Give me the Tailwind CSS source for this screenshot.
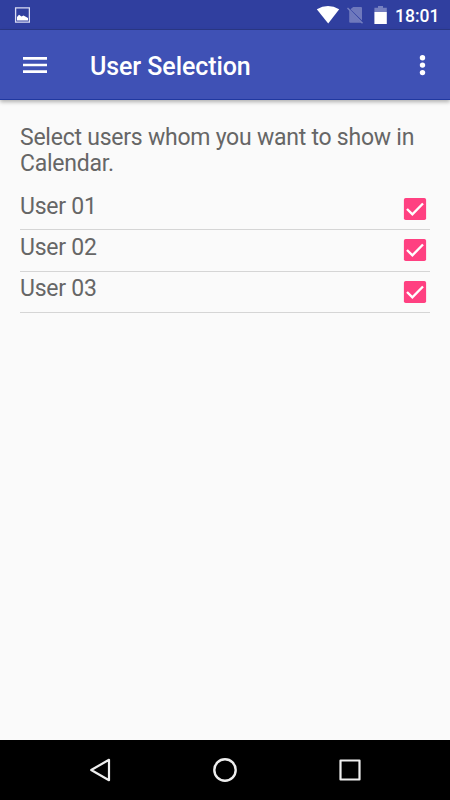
<!DOCTYPE html>
<html lang="en">
<head>
<meta charset="utf-8">
<title>User Selection</title>
<script src="https://cdn.jsdelivr.net/npm/@tailwindcss/browser@4"></script>
</head>
<body class="w-[450px] h-[800px] overflow-hidden flex flex-col bg-[#fafafa] font-[Roboto,sans-serif] text-[#666666]">
<div class="h-[30px] shrink-0 bg-[#303f9f] border-b border-[#2b3887] flex items-center text-white">
  <svg class="ml-[14px] w-4 h-[30px]" viewBox="14 0 16 30" fill="none"><path d="M15.6 7.9H29.4V22.2H15.6Z" stroke="#d9dcf3" stroke-width="1.3"/><path d="M17 20.5V17L19 14.8L21.5 16.5L23.5 15.5L28 18V20.5Z" fill="#fff"/></svg>
  <svg class="ml-auto w-[80px] h-[30px]" viewBox="310 0 80 30" fill="none">
    <path d="M316.8 9.2Q328 2.6 339.2 9.2L328.2 23.6Z" fill="#fff"/>
    <path d="M353.2 7H361Q362 7 362 8V20.6L350.4 9.2ZM349.2 10.6L361.4 22.8H350.2Q349.2 22.8 349.2 21.8Z" fill="#6f79bc"/>
    <path d="M347.5 8L362.5 23.3" stroke="#7680c0" stroke-width="1.4"/>
    <path d="M374.4 12V7.8H378V6H383V7.8H386.8V12Z" fill="#7680c0"/><path d="M374.4 12H386.8V24H374.4Z" fill="#fff"/>
  </svg>
  <span class="w-[45px] ml-[5px] mr-[10px] text-[17.5px] leading-[30px] font-medium whitespace-nowrap relative top-px">18:01</span>
</div>
<header class="relative h-[70px] shrink-0 bg-[#3f51b5] border-b border-[#2038a0] shadow-[0_2px_4px_rgba(0,0,0,0.3)] flex items-center text-white">
  <svg class="ml-[23px] w-6 h-[18px]" viewBox="0 0 24 18"><path d="M0 1H24V3.7H0ZM0 7.7H24V10.3H0ZM0 14.3H24V17H0Z" fill="#fff"/></svg>
  <h1 class="ml-[43px] text-[25px] leading-[30px] tracking-[-0.08px] font-medium whitespace-nowrap relative top-[2px]">User Selection</h1>
  <svg class="ml-auto mr-[24px] w-2 h-6" viewBox="0 0 8 24" fill="#fff"><circle cx="4.5" cy="4.7" r="2.7"/><circle cx="4.5" cy="12.1" r="2.7"/><circle cx="4.5" cy="19.6" r="2.7"/></svg>
</header>
<main class="flex-1 px-5 pt-[25px] text-[23px] tracking-[-0.24px] leading-[26.4px]">
  <p class="h-[64px]">Select users whom you want to show in<br>Calendar.</p>
  <ul>
    <li class="h-[41.3px] border-b border-[#d5d5d5] flex justify-between pr-[3px]"><span class="pt-[5px]">User 01</span><svg class="mt-2 w-6 h-6" viewBox="0 0 24 24"><rect x=".9" y=".9" width="22.2" height="22.2" rx="1.8" fill="#ff4081"/><path d="M4 12L9.4 17.3L20 6.5" fill="none" stroke="#fff" stroke-width="2.4"/></svg></li>
    <li class="h-[41.3px] border-b border-[#d5d5d5] flex justify-between pr-[3px]"><span class="pt-[5px]">User 02</span><svg class="mt-2 w-6 h-6" viewBox="0 0 24 24"><rect x=".9" y=".9" width="22.2" height="22.2" rx="1.8" fill="#ff4081"/><path d="M4 12L9.4 17.3L20 6.5" fill="none" stroke="#fff" stroke-width="2.4"/></svg></li>
    <li class="h-[41.3px] border-b border-[#d5d5d5] flex justify-between pr-[3px]"><span class="pt-[4.5px]">User 03</span><svg class="mt-2 w-6 h-6" viewBox="0 0 24 24"><rect x=".9" y=".9" width="22.2" height="22.2" rx="1.8" fill="#ff4081"/><path d="M4 12L9.4 17.3L20 6.5" fill="none" stroke="#fff" stroke-width="2.4"/></svg></li>
  </ul>
</main>
<nav class="h-[60px] shrink-0 bg-black flex justify-center items-center gap-[95px]">
  <svg class="w-[30px] h-[30px]" viewBox="0 0 30 30" fill="none" stroke="#eee" stroke-width="2.2" stroke-linejoin="round"><path d="M24 4.8V25.2L6.2 15Z"/></svg>
  <svg class="w-[30px] h-[30px]" viewBox="0 0 30 30" fill="none" stroke="#eee" stroke-width="2.4"><circle cx="15" cy="15" r="10.7"/></svg>
  <svg class="w-[30px] h-[30px]" viewBox="0 0 30 30" fill="none" stroke="#eee" stroke-width="2.2" stroke-linejoin="round"><path d="M5.5 5.5H24.5V24.5H5.5Z"/></svg>
</nav>
</body>
</html>
